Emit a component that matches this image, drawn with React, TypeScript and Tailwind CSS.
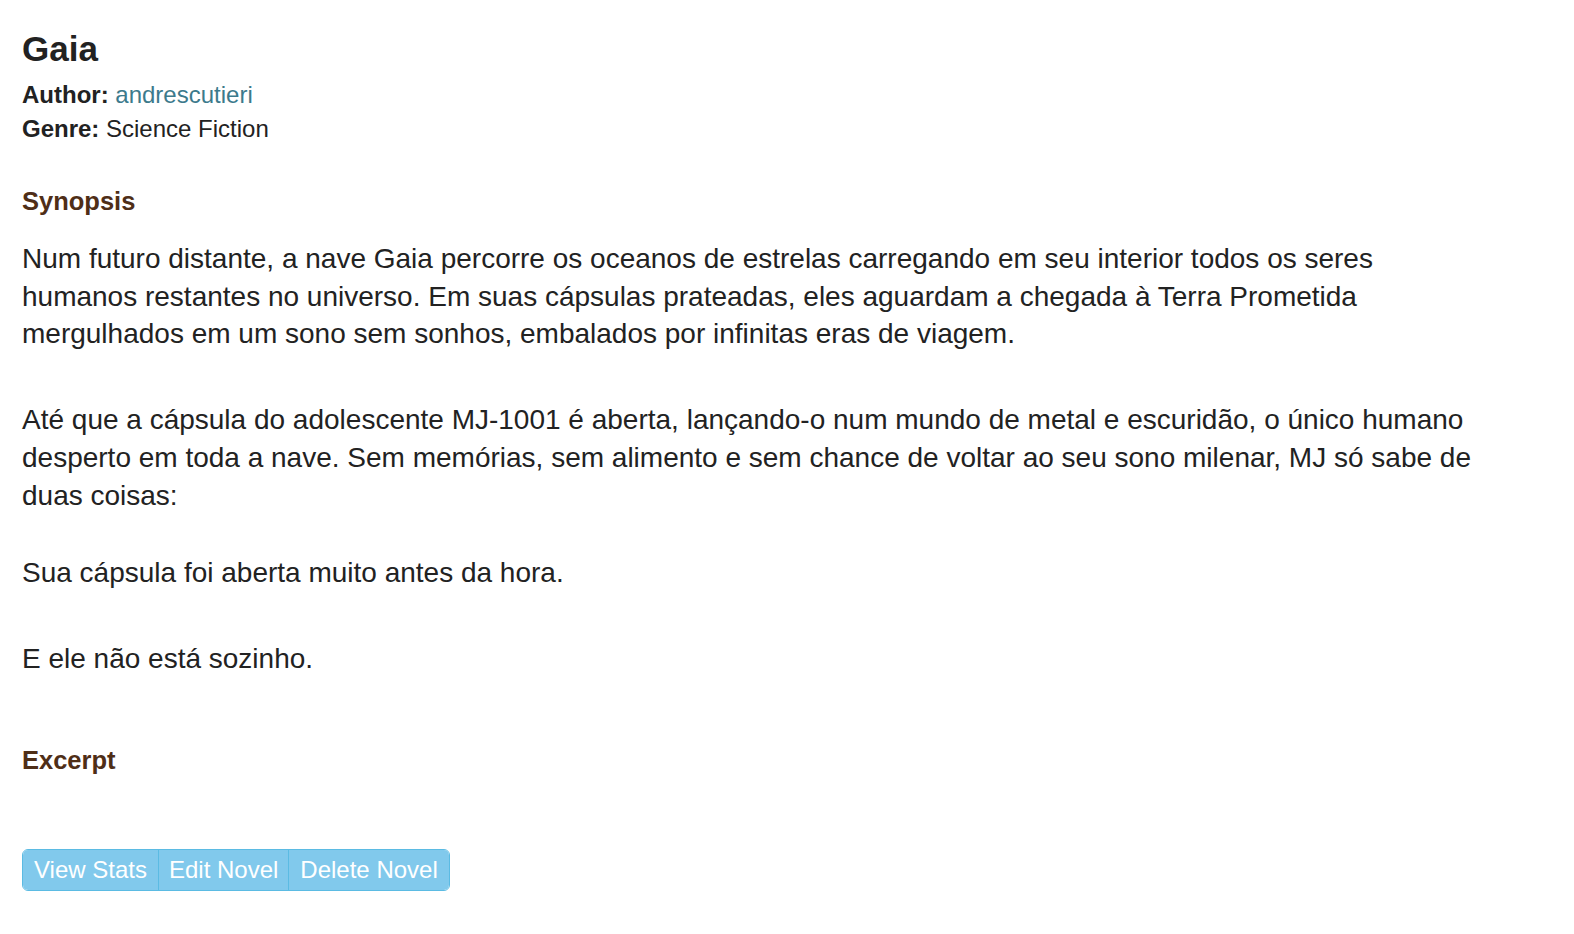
const App = () => {
  return (
    <div className="min-h-screen bg-white text-[#222] px-[22px] pt-[28px] font-['Liberation_Sans',Arial,sans-serif]">
      <h1 className="text-[35px] leading-[42px] font-bold text-[#222]">Gaia</h1>
      <div className="mt-[8px] text-[24px] leading-[34px]">
        <div>
          <span className="font-bold">Author:</span>{' '}
          <a href="#" className="text-[#3c7a8c]">andrescutieri</a>
        </div>
        <div>
          <span className="font-bold">Genre:</span> Science Fiction
        </div>
      </div>

      <h3 className="mt-[40px] text-[25.5px] leading-[30px] font-bold text-[#4f2e17]">Synopsis</h3>
      <div className="mt-[24px] max-w-[1455px] text-[28px] leading-[37.7px] text-[#222]">
        <p>
          Num futuro distante, a nave Gaia percorre os oceanos de estrelas carregando em seu interior todos os seres humanos restantes no universo. Em suas cápsulas prateadas, eles aguardam a chegada à Terra Prometida mergulhados em um sono sem sonhos, embalados por infinitas eras de viagem.
        </p>
        <p className="mt-[48px]">
          Até que a cápsula do adolescente MJ-1001 é aberta, lançando-o num mundo de metal e escuridão, o único humano desperto em toda a nave. Sem memórias, sem alimento e sem chance de voltar ao seu sono milenar, MJ só sabe de duas coisas:
        </p>
        <p className="mt-[40px]">Sua cápsula foi aberta muito antes da hora.</p>
        <p className="mt-[48px]">E ele não está sozinho.</p>
      </div>

      <h3 className="mt-[67px] text-[25.5px] leading-[30px] font-bold text-[#4f2e17]">Excerpt</h3>

      <div className="mt-[74px] inline-flex rounded-[6px] border border-[#5bbbe3] overflow-hidden text-[24px] leading-[40px] text-white">
        <button className="px-[11px] bg-[#81c9ec]">View Stats</button>
        <button className="px-[10px] bg-[#81c9ec] border-l border-[#5bbbe3]">Edit Novel</button>
        <button className="px-[11px] bg-[#81c9ec] border-l border-[#5bbbe3]">Delete Novel</button>
      </div>
    </div>
  );
};

export default App;
